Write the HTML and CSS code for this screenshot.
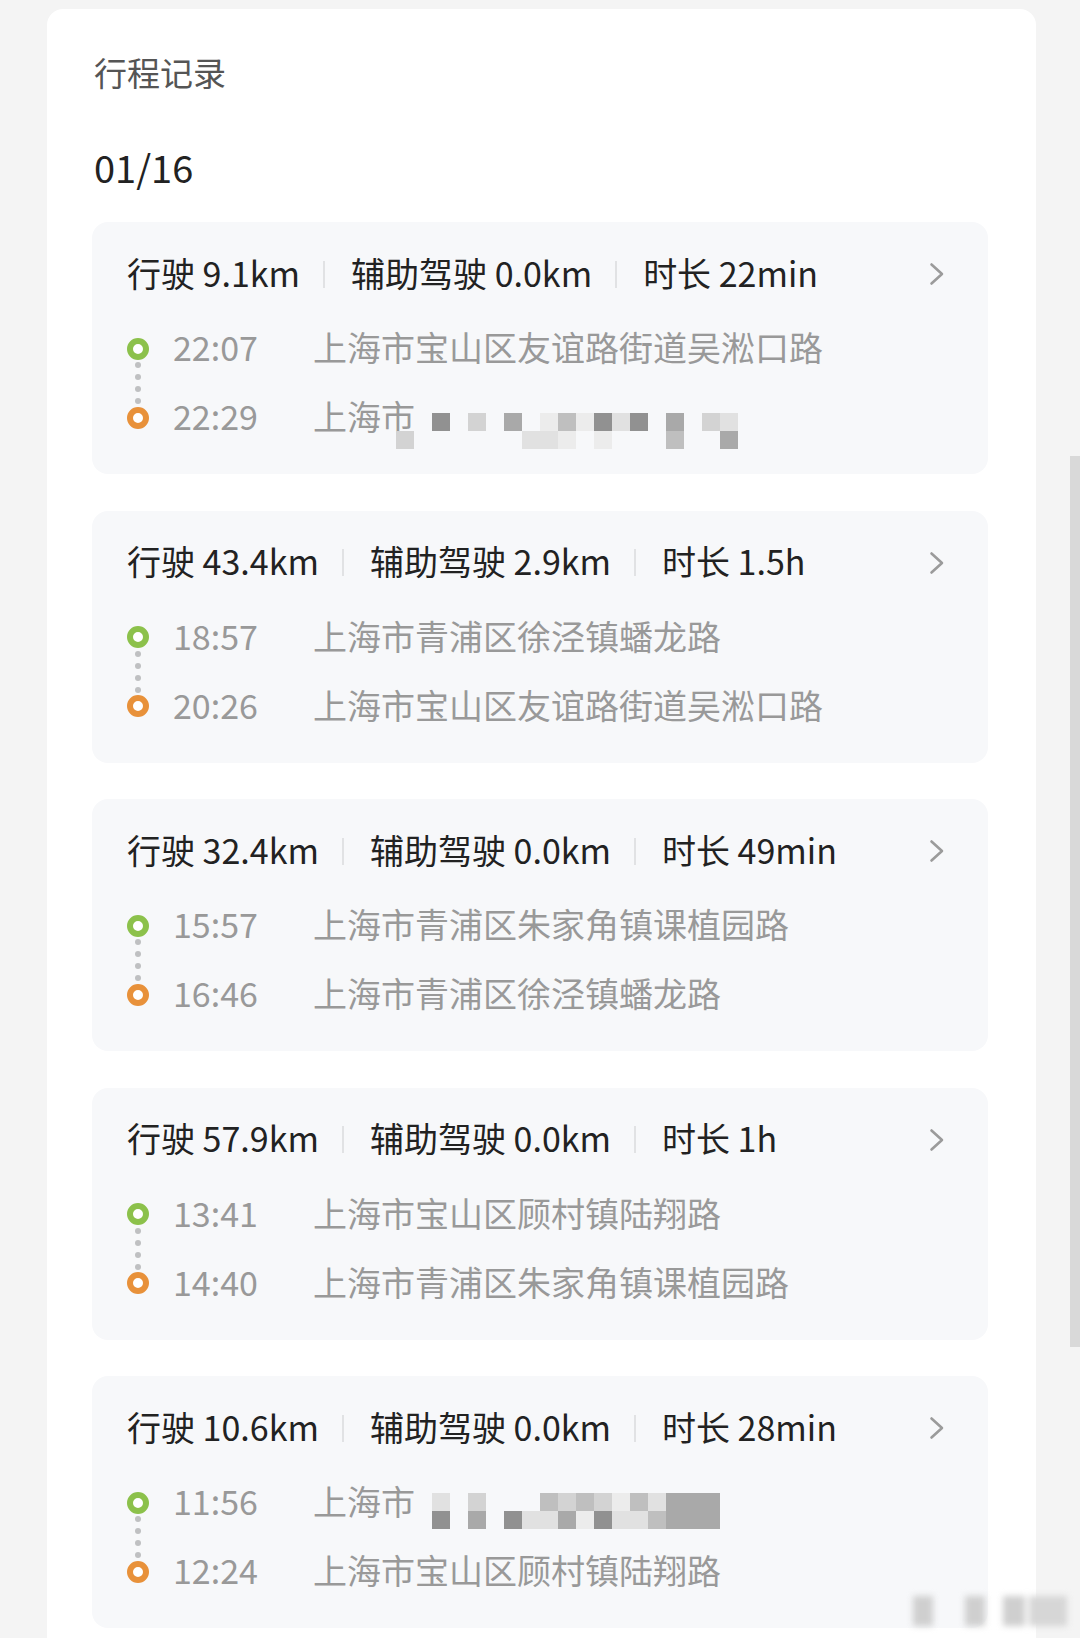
FILE: index.html
```html
<!DOCTYPE html>
<html>
<head>
	<meta charset="UTF-8">
	<title>行程记录</title>
	<link rel="stylesheet" href="styles.css">
</head>
<body>
	<div class="panel">
		<h1 class="title">行程记录</h1>
		<div class="date">01/16</div>

		<div class="trip">
			<div class="trip-head">
				<span class="stat">行驶 9.1km</span><span class="sep"></span>
				<span class="stat">辅助驾驶 0.0km</span><span class="sep"></span>
				<span class="stat">时长 22min</span>
				<svg class="arrow" width="16" height="24" viewBox="0 0 16 24"><path d="M2.5 2.5 L13 12 L2.5 21.5" fill="none" stroke="#9b9b9b" stroke-width="2.6" stroke-linecap="round" stroke-linejoin="round"/></svg>
			</div>
			<div class="route">
				<div class="track"><span class="ring start"></span><span class="dots"><i></i><i></i><i></i><i></i></span><span class="ring end"></span></div>
				<div class="stops">
					<div class="stop"><span class="time">22:07</span><span class="place">上海市宝山区友谊路街道吴淞口路</span></div>
					<div class="stop"><span class="time">22:29</span><span class="place">上海市
						<span class="mosaic m-a">
							<i></i><i></i><i class="k1"></i><i></i><i class="k4"></i><i></i><i class="k2"></i><i></i><i class="k6"></i><i class="k3"></i><i class="k6"></i><i class="k1"></i><i class="k5"></i><i class="k1"></i><i></i><i class="k2"></i><i></i><i class="k4"></i><i class="k5"></i>
							<i class="k4"></i><i></i><i></i><i></i><i></i><i></i><i></i><i class="k5"></i><i class="k5"></i><i class="k6"></i><i></i><i class="k6"></i><i></i><i></i><i></i><i class="k3"></i><i></i><i></i><i class="k2"></i>
						</span></span></div>
				</div>
			</div>
		</div>

		<div class="trip">
			<div class="trip-head">
				<span class="stat">行驶 43.4km</span><span class="sep"></span>
				<span class="stat">辅助驾驶 2.9km</span><span class="sep"></span>
				<span class="stat">时长 1.5h</span>
				<svg class="arrow" width="16" height="24" viewBox="0 0 16 24"><path d="M2.5 2.5 L13 12 L2.5 21.5" fill="none" stroke="#9b9b9b" stroke-width="2.6" stroke-linecap="round" stroke-linejoin="round"/></svg>
			</div>
			<div class="route">
				<div class="track"><span class="ring start"></span><span class="dots"><i></i><i></i><i></i><i></i></span><span class="ring end"></span></div>
				<div class="stops">
					<div class="stop"><span class="time">18:57</span><span class="place">上海市青浦区徐泾镇蟠龙路</span></div>
					<div class="stop"><span class="time">20:26</span><span class="place">上海市宝山区友谊路街道吴淞口路</span></div>
				</div>
			</div>
		</div>

		<div class="trip">
			<div class="trip-head">
				<span class="stat">行驶 32.4km</span><span class="sep"></span>
				<span class="stat">辅助驾驶 0.0km</span><span class="sep"></span>
				<span class="stat">时长 49min</span>
				<svg class="arrow" width="16" height="24" viewBox="0 0 16 24"><path d="M2.5 2.5 L13 12 L2.5 21.5" fill="none" stroke="#9b9b9b" stroke-width="2.6" stroke-linecap="round" stroke-linejoin="round"/></svg>
			</div>
			<div class="route">
				<div class="track"><span class="ring start"></span><span class="dots"><i></i><i></i><i></i><i></i></span><span class="ring end"></span></div>
				<div class="stops">
					<div class="stop"><span class="time">15:57</span><span class="place">上海市青浦区朱家角镇课植园路</span></div>
					<div class="stop"><span class="time">16:46</span><span class="place">上海市青浦区徐泾镇蟠龙路</span></div>
				</div>
			</div>
		</div>

		<div class="trip">
			<div class="trip-head">
				<span class="stat">行驶 57.9km</span><span class="sep"></span>
				<span class="stat">辅助驾驶 0.0km</span><span class="sep"></span>
				<span class="stat">时长 1h</span>
				<svg class="arrow" width="16" height="24" viewBox="0 0 16 24"><path d="M2.5 2.5 L13 12 L2.5 21.5" fill="none" stroke="#9b9b9b" stroke-width="2.6" stroke-linecap="round" stroke-linejoin="round"/></svg>
			</div>
			<div class="route">
				<div class="track"><span class="ring start"></span><span class="dots"><i></i><i></i><i></i><i></i></span><span class="ring end"></span></div>
				<div class="stops">
					<div class="stop"><span class="time">13:41</span><span class="place">上海市宝山区顾村镇陆翔路</span></div>
					<div class="stop"><span class="time">14:40</span><span class="place">上海市青浦区朱家角镇课植园路</span></div>
				</div>
			</div>
		</div>

		<div class="trip">
			<div class="trip-head">
				<span class="stat">行驶 10.6km</span><span class="sep"></span>
				<span class="stat">辅助驾驶 0.0km</span><span class="sep"></span>
				<span class="stat">时长 28min</span>
				<svg class="arrow" width="16" height="24" viewBox="0 0 16 24"><path d="M2.5 2.5 L13 12 L2.5 21.5" fill="none" stroke="#9b9b9b" stroke-width="2.6" stroke-linecap="round" stroke-linejoin="round"/></svg>
			</div>
			<div class="route">
				<div class="track"><span class="ring start"></span><span class="dots"><i></i><i></i><i></i><i></i></span><span class="ring end"></span></div>
				<div class="stops">
					<div class="stop"><span class="time">11:56</span><span class="place">上海市
						<span class="mosaic m-b">
							<i></i><i></i><i class="k5"></i><i></i><i class="k4"></i><i></i><i></i><i></i><i class="k3"></i><i class="k4"></i><i class="k3"></i><i class="k4"></i><i class="k6"></i><i class="k3"></i><i class="k5"></i><i class="k2"></i><i class="k2"></i><i class="k2"></i><i></i>
							<i></i><i></i><i class="k1"></i><i></i><i class="k2"></i><i></i><i class="k1"></i><i class="k5"></i><i class="k5"></i><i class="k2"></i><i class="k6"></i><i class="k1"></i><i class="k5"></i><i class="k5"></i><i class="k3"></i><i class="k2"></i><i class="k2"></i><i class="k2"></i><i></i>
						</span></span></div>
					<div class="stop"><span class="time">12:24</span><span class="place">上海市宝山区顾村镇陆翔路</span></div>
				</div>
			</div>
		</div>
	</div>

	<div class="scrollbar"></div>
	<div class="watermark"><i class="w1"></i><i class="w2"></i><i class="w3"></i><i class="w4"></i></div>
</body>
</html>
```

FILE: styles.css
```css
body {
	margin: 0;
	background-color: #f4f4f4;
	font-family: "Noto Sans CJK SC", "Noto Sans", sans-serif;
	height: 1638px;
	overflow: hidden;
}

.panel {
	background-color: #fff;
	margin: 9px 44px 0 47px;
	padding: 42px 48px 40px 45px;
	border-radius: 16px;
}

.title {
	margin: 0 0 0 2px;
	font-size: 33px;
	font-weight: normal;
	line-height: 42px;
	color: #555;
}

.date {
	margin: 48px 0 29px 2px;
	font-size: 38px;
	line-height: 52px;
	color: #222;
}

.trip {
	background-color: #f7f8fa;
	border-radius: 16px;
	height: 252px;
	box-sizing: border-box;
	padding: 30px 43px 22px 35px;
	margin-bottom: 36.5px;
}

.trip-head {
	display: flex;
	align-items: center;
	height: 44px;
	font-size: 34px;
	color: #222;
	white-space: nowrap;
}

.stat {
	padding-bottom: 4px;
}

.sep {
	width: 2px;
	height: 27px;
	margin: 0 26px 0 23px;
	background-color: #e1e2e4;
}

.arrow {
	margin-left: auto;
}

.route {
	display: flex;
	margin-top: 18px;
}

.track {
	display: flex;
	flex-direction: column;
	align-items: center;
	width: 22px;
	padding-top: 23.5px;
}

.ring {
	width: 22px;
	height: 22px;
	box-sizing: border-box;
	border: 6px solid;
	border-radius: 50%;
	background-color: #fff;
}

.ring.start {
	border-color: #8cc14b;
}

.ring.end {
	border-color: #e8913a;
}

.dots {
	display: flex;
	flex-direction: column;
	justify-content: space-between;
	height: 47px;
	box-sizing: border-box;
	padding: 2.5px 0;
}

.dots i {
	display: block;
	width: 6px;
	height: 6px;
	border-radius: 50%;
	background-color: #bfc0c2;
}

.stops {
	margin-left: 24px;
}

.stop {
	display: flex;
	height: 69px;
	line-height: 65px;
	color: #999;
	white-space: nowrap;
}

.time {
	width: 140px;
	font-size: 34px;
}

.place {
	position: relative;
	font-size: 34px;
}

/* privacy blur over part of an address */
.mosaic {
	position: absolute;
	left: 83px;
	display: grid;
	grid-template-columns: repeat(19, 18px);
	grid-auto-rows: 18px;
}

.mosaic.m-a {
	top: 30px;
}

.mosaic.m-b {
	top: 25px;
}

.mosaic i.k1 { background-color: #919191; }
.mosaic i.k2 { background-color: #a9a9a9; }
.mosaic i.k3 { background-color: #bfbfbf; }
.mosaic i.k4 { background-color: #d3d3d3; }
.mosaic i.k5 { background-color: #e1e1e1; }
.mosaic i.k6 { background-color: #ececec; }

.scrollbar {
	position: absolute;
	right: 0;
	top: 456px;
	width: 10px;
	height: 891px;
	background-color: #d9d9d9;
}

.watermark {
	position: absolute;
	left: 913px;
	top: 1596px;
	width: 160px;
	height: 30px;
	filter: blur(3px);
}

.watermark i {
	position: absolute;
	top: 0;
	height: 30px;
	background-color: #cfcfcf;
}

.watermark .w1 { left: 0; width: 20px; }
.watermark .w2 { left: 52px; width: 20px; }
.watermark .w3 { left: 90px; width: 22px; }
.watermark .w4 { left: 116px; width: 38px; background-color: #d6d6d6; }
```
